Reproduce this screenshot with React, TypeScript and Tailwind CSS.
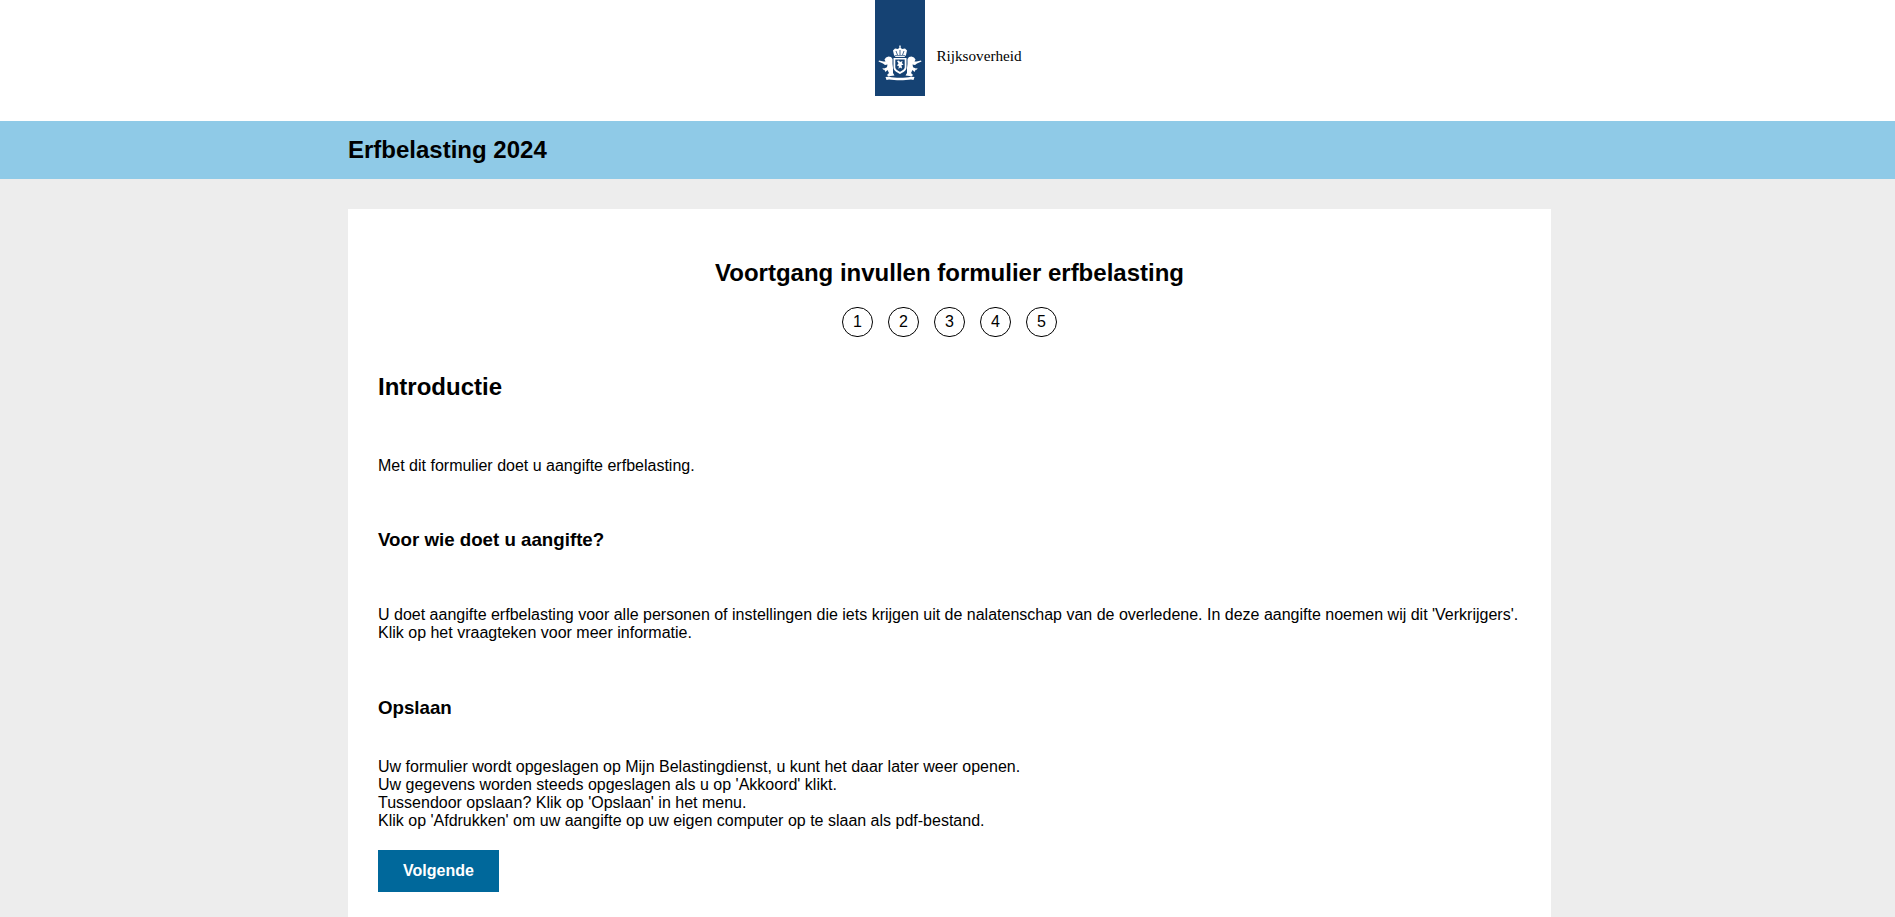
const FONT = "font-['Liberation_Sans',Arial,sans-serif]";

function Crest() {
  return (
    <svg viewBox="0 0 50 50" className="w-[50px] h-[50px]" fill="#fff">
      {/* kroon */}
      <path d="M25 5 L25.8 6.2 L25.5 7.5 L27 9 L30 8.5 L32 10.5 L31 15 L29.5 17 H20.5 L19 15 L18 10.5 L20 8.5 L23 9 L24.5 7.5 L24.2 6.2 Z" />
      <path d="M21 11 L22.5 15 M25 10 V15 M29 11 L27.5 15" stroke="#154273" strokeWidth="0.8" fill="none" />
      <path d="M20 15.6 H30" stroke="#154273" strokeWidth="0.7" fill="none" />
      {/* schild */}
      <path d="M18.5 18 H31.5 V27.5 C31.5 31 27.5 32.5 25 34 C22.5 32.5 18.5 31 18.5 27.5 Z" />
      <path d="M20.3 19.6 H29.7 V27.2 C29.7 29.6 26.6 30.8 25 31.8 C23.4 30.8 20.3 29.6 20.3 27.2 Z" fill="#154273" />
      <path d="M22 21 L24 20.5 L25 22 L27.5 21 L27 23 L28.5 25 L26.5 25 L27 28.5 L25 27.5 L23.5 29 L23.8 26 L21.8 25.5 L23.5 23.5 Z" />
      {/* leeuw links */}
      <path d="M11 17.5 L13.5 16.5 L16 17 L17.5 19 L17.5 24 L18 28 L18 33 L19.5 35.5 L15.5 36 L13.5 36.5 L12 35 L14 33 L12.5 30 L10.5 32 L9.5 30 L12 27 L12.5 24.5 L10 25 L8 23.5 L3.5 21.5 L4 20.5 L8.5 21.5 L10.5 21.5 L9.5 19.5 Z" />
      <path d="M11.5 27.5 L9 28.5 L7.5 28 L8 29.5 L10 30 L12 29 Z" />
      {/* leeuw rechts */}
      <path d="M39 17.5 L36.5 16.5 L34 17 L32.5 19 L32.5 24 L32 28 L32 33 L30.5 35.5 L34.5 36 L36.5 36.5 L38 35 L36 33 L37.5 30 L39.5 32 L40.5 30 L38 27 L37.5 24.5 L40 25 L42 23.5 L46.5 21.5 L46 20.5 L41.5 21.5 L39.5 21.5 L40.5 19.5 Z" />
      <path d="M38.5 27.5 L41 28.5 L42.5 28 L42 29.5 L40 30 L38 29 Z" />
      {/* lint */}
      <path d="M10.5 37 L14 36.8 C20 38.2 30 38.2 36 36.8 L39.5 37 L38.5 40 L36 39.4 C30 40.4 20 40.4 14 39.4 L11.5 40 Z" />
    </svg>
  );
}

const steps = [1, 2, 3, 4, 5];

function App() {
  return (
    <div className={`${FONT} h-[917px] overflow-hidden bg-[#ededed] text-black`}>
      <div className="h-[121px] bg-white flex justify-center">
        <div className="flex items-start ml-[2px]">
          <div className="w-[50px] h-[96px] bg-[#154273] flex items-end pb-[6px]">
            <Crest />
          </div>
          <span className="ml-[11px] mt-[46px] font-['Liberation_Serif',serif] text-[15.2px] leading-[20px]">Rijksoverheid</span>
        </div>
      </div>
      <div className="h-[58px] bg-[#8fcae7]">
        <div className="w-[1203px] ml-[348px] h-full flex items-center">
          <h1 className="text-[24px] font-bold">Erfbelasting 2024</h1>
        </div>
      </div>
      <main className="w-[1203px] ml-[348px] mt-[30px] bg-white px-[30px] pt-[50px] h-[800px]">
        <h2 className="text-[24px] font-bold text-center leading-[28px]">Voortgang invullen formulier erfbelasting</h2>
        <div className="flex justify-center gap-[15px] mt-[20px]">
          {steps.map((n) => (
            <div key={n} className="w-[31px] h-[30px] rounded-full border border-black flex items-center justify-center text-[16px]">
              {n}
            </div>
          ))}
        </div>
        <h3 className="text-[24px] font-bold mt-[36px] leading-[28px]">Introductie</h3>
        <p className="text-[16px] leading-[18px] mt-[56px]">Met dit formulier doet u aangifte erfbelasting.</p>
        <h4 className="text-[18.72px] font-bold mt-[54px] leading-[22px]">Voor wie doet u aangifte?</h4>
        <p className="text-[16px] leading-[18px] mt-[55px]">
          U doet aangifte erfbelasting voor alle personen of instellingen die iets krijgen uit de nalatenschap van de overledene. In deze aangifte noemen wij dit 'Verkrijgers'.
          <br />
          Klik op het vraagteken voor meer informatie.
        </p>
        <h4 className="text-[18.72px] font-bold mt-[55px] leading-[22px]">Opslaan</h4>
        <p className="text-[16px] leading-[18px] mt-[39px]">
          Uw formulier wordt opgeslagen op Mijn Belastingdienst, u kunt het daar later weer openen.
          <br />
          Uw gegevens worden steeds opgeslagen als u op 'Akkoord' klikt.
          <br />
          Tussendoor opslaan? Klik op 'Opslaan' in het menu.
          <br />
          Klik op 'Afdrukken' om uw aangifte op uw eigen computer op te slaan als pdf-bestand.
        </p>
        <button className="mt-[20px] w-[121px] h-[42px] bg-[#00689b] text-white font-bold text-[16px]">Volgende</button>
      </main>
    </div>
  );
}

export default App;
